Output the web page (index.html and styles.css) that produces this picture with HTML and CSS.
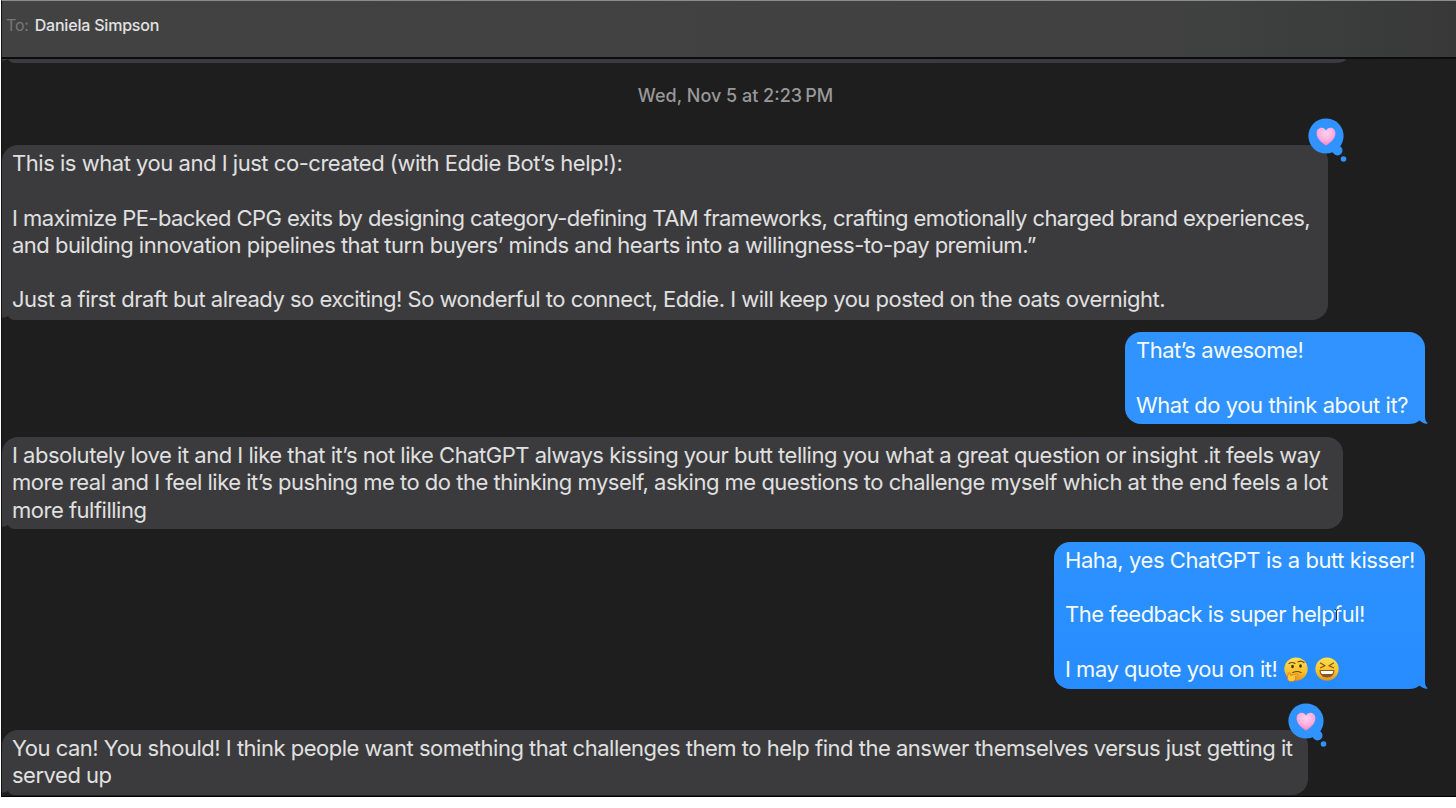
FILE: index.html
```
<!DOCTYPE html>
<html lang="en">
<head>
    <meta charset="UTF-8">
    <meta name="viewport" content="width=device-width, initial-scale=1.0">
    <title>Messages - Daniela Simpson</title>
    <link rel="stylesheet" href="styles.css">
</head>
<body>
    <!-- Shared shapes -->
    <svg class="defs" width="0" height="0">
        <defs>
            <radialGradient id="pink" cx="50%" cy="30%" r="70%">
                <stop offset="0" stop-color="#ffd3ee"/>
                <stop offset="0.55" stop-color="#ffb0e0"/>
                <stop offset="1" stop-color="#fb82bd"/>
            </radialGradient>
            <linearGradient id="yellow" x1="0" y1="0" x2="0" y2="1">
                <stop offset="0" stop-color="#ffe04f"/>
                <stop offset="0.6" stop-color="#fbc32d"/>
                <stop offset="1" stop-color="#e9931c"/>
            </linearGradient>
            <symbol id="heart-badge" viewBox="0 0 40 44">
                <circle cx="18" cy="18" r="17.6" fill="#3193ff"/>
                <circle cx="29.5" cy="32.5" r="5" fill="#3193ff"/>
                <circle cx="35.5" cy="41" r="2.8" fill="#3193ff"/>
                <path d="M18 27.5C14 24.6 8.6 20.8 8.6 15.4C8.6 12 10.8 9.8 13.4 9.8C15.6 9.8 17.2 11 18 12.7C18.8 11 20.4 9.8 22.6 9.8C25.2 9.8 27.4 12 27.4 15.4C27.4 20.8 22 24.6 18 27.5Z" fill="url(#pink)"/>
            </symbol>
        </defs>
    </svg>

    <div class="window">
        <!-- Header -->
        <header class="header">
            <span class="to">To:</span>
            <span class="name">Daniela Simpson</span>
        </header>

        <!-- Conversation -->
        <main class="chat">
            <div class="previous">
                <svg class="notch" width="12" height="4" viewBox="0 0 12 4"><path d="M0 4V1.5C3 1.8 5 1 6 0C7.5 2.5 9 3.5 12 4Z"/></svg>
            </div>
            <div class="timestamp">Wed, Nov 5 at 2:23&thinsp;PM</div>

            <div class="bubble received first">
                <p class="l1">This is what you and I just co-created (with Eddie Bot’s help!):</p>
                <br>
                <p class="l2">I maximize PE-backed CPG exits by designing category-defining TAM frameworks, crafting emotionally charged brand experiences,</p>
                <p class="l3">and building innovation pipelines that turn buyers’ minds and hearts into a willingness-to-pay premium.”</p>
                <br>
                <p class="l4">Just a first draft but already so exciting! So wonderful to connect, Eddie. I will keep you posted on the oats overnight.</p>
                <svg class="heart" width="40" height="44"><use href="#heart-badge"/></svg>
                <svg class="notch" width="12" height="4" viewBox="0 0 12 4"><path d="M0 4V1.5C3 1.8 5 1 6 0C7.5 2.5 9 3.5 12 4Z"/></svg>
            </div>

            <div class="bubble sent awesome">
                <p class="l5">That’s awesome!</p>
                <br>
                <p class="l6">What do you think about it?</p>
                <svg class="tail" width="19" height="12" viewBox="0 0 19 12"><path d="M16 0V5C16 8 17 10 19 11.5C16 12 13 11 10.5 8.5C8 11 4 12 0 12V0Z"/></svg>
            </div>

            <div class="bubble received second">
                <p class="l7">I absolutely love it and I like that it’s not like ChatGPT always kissing your butt telling you what a great question or insight .it feels way</p>
                <p class="l8">more real and I feel like it’s pushing me to do the thinking myself, asking me questions to challenge myself which at the end feels a lot</p>
                <p class="l9">more fulfilling</p>
                <svg class="notch" width="12" height="4" viewBox="0 0 12 4"><path d="M0 4V1.5C3 1.8 5 1 6 0C7.5 2.5 9 3.5 12 4Z"/></svg>
            </div>

            <div class="bubble sent kisser">
                <p class="l10">Haha, yes ChatGPT is a butt kisser!</p>
                <br>
                <p class="l11">The feedback is super helpful!</p>
                <br>
                <p class="l12"><span>I may quote you on it!</span>
                    <svg class="emoji" width="24" height="25" viewBox="0 0 24 25">
                        <circle cx="12" cy="12" r="11.6" fill="url(#yellow)"/>
                        <path d="M5 6.500Q8 4.500 11 6.500M14 5Q17 3 20 5.500" stroke="#70451b" stroke-width="1.2" fill="none" stroke-linecap="round"/>
                        <ellipse cx="8.5" cy="9.5" rx="1.4" ry="1.8" fill="#4b2d14"/>
                        <ellipse cx="16.5" cy="9" rx="1.4" ry="1.8" fill="#4b2d14"/>
                        <path d="M9 15.5Q13 13.5 17 15.5" stroke="#70451b" stroke-width="1.2" fill="none" stroke-linecap="round"/>
                        <path d="M4.5 16C5.5 15 6.5 16 6.5 18.5L13 16.8C14.5 16.5 15 18 13.8 18.5L11 19.7C12.5 21 11 24.5 8 24.7C4.5 25 3 22.5 3.4 20Z" fill="#ffc83c" stroke="#d67d18" stroke-width="0.8"/>
                    </svg>
                    <svg class="emoji" width="24" height="25" viewBox="0 0 24 25">
                        <circle cx="12" cy="12" r="11.6" fill="url(#yellow)"/>
                        <path d="M5.500 6L10 8.700L5.500 10.800M18.500 6L14 8.700L18.500 10.800" stroke="#7d5320" stroke-width="1.2" fill="none" stroke-linecap="round" stroke-linejoin="round"/>
                        <path d="M4.500 13H19.500C19.300 17.800 16.500 20.500 12 20.500S4.700 17.800 4.500 13Z" fill="#8a5622"/>
                        <path d="M5.700 14H18.300C18 16 17.500 16.700 16.500 17H7.500C6.500 16.700 6 16 5.700 14Z" fill="#fff"/>
                    </svg>
                </p>
                <svg class="cursor" width="5" height="12" viewBox="0 0 5 12"><path d="M0.5 0.5Q2.5 0.5 2.5 2Q2.5 0.5 4.5 0.5M2.5 2V11" fill="none" stroke="#12365f"/></svg>
                <svg class="tail" width="19" height="12" viewBox="0 0 19 12"><path d="M16 0V5C16 8 17 10 19 11.5C16 12 13 11 10.5 8.5C8 11 4 12 0 12V0Z"/></svg>
            </div>

            <div class="bubble received last">
                <p class="l13">You can! You should! I think people want something that challenges them to help find the answer themselves versus just getting it</p>
                <p class="l14">served up</p>
                <svg class="heart" width="40" height="44"><use href="#heart-badge"/></svg>
                <svg class="notch" width="12" height="4" viewBox="0 0 12 4"><path d="M0 4V1.5C3 1.8 5 1 6 0C7.5 2.5 9 3.5 12 4Z"/></svg>
            </div>
        </main>
    </div>
</body>
</html>
```
FILE: styles.css
```
body {
    margin: 0;
    background: white;
    font-family: Inter, 'Liberation Sans', sans-serif;
    overflow: hidden;
}

.defs {
    position: absolute;
}

.window {
    box-sizing: border-box;
    margin-left: 1px;
    height: 797px;
    background: #1e1e1e;
    border-top: 1px solid #8a8d8a;
    border-left: 1px solid #101112;
    border-bottom: 1px solid #000;
    overflow: hidden;
}

/* Header */
.header {
    box-sizing: border-box;
    height: 58px;
    padding: 13px 0 0 4px;
    background: linear-gradient(90deg, #424243 0%, #414142 80%, #3b3e3c 91%, #383838 100%);
    border-bottom: 2px solid #0c0c0c;
    display: flex;
    gap: 6px;
    font-size: 16px;
    line-height: 23px;
    letter-spacing: -0.2px;
}

.to {
    color: #77787a;
}

.name {
    color: #e2e2e2;
    font-weight: 500;
}

/* Conversation */
.chat {
    display: flex;
    flex-direction: column;
    align-items: flex-start;
}

.previous {
    position: relative;
    width: 1344px;
    height: 4px;
    background: #3b3b3d;
    border-bottom-right-radius: 10px 4px;
}

.timestamp {
    align-self: center;
    margin: 21px 0 0 13px;
    height: 24px;
    line-height: 24px;
    font-size: 18px;
    font-weight: 500;
    color: #98989a;
}

.bubble {
    box-sizing: border-box;
    position: relative;
    padding: 5px 11px 5px 10px;
    border-radius: 16px;
    font-size: 22px;
    line-height: 27.3px;
    letter-spacing: -0.49px;
    white-space: nowrap;
    margin-bottom: 12.5px;
}

.bubble p {
    margin: 0;
    height: 27.3px;
}

.received {
    background: #3b3b3d;
    color: #e0e0e0;
    border-bottom-left-radius: 0;
}

.sent {
    align-self: flex-end;
    margin-right: 31px;
    padding-left: 11px;
    background: #3193ff;
    color: #f4faff;
    border-bottom-right-radius: 0;
}

.first {
    margin-top: 37px;
    width: 1326px;
    height: 175px;
    margin-bottom: 12px;
}

.awesome {
    width: 300px;
    height: 92px;
    margin-bottom: 13px;
}

.second {
    width: 1341px;
    height: 92px;
}

.kisser {
    width: 371px;
    height: 147px;
    background: linear-gradient(#2d91ff, #278dff);
    margin-bottom: 41px;
}

.last {
    width: 1306px;
    height: 65px;
}

/* Line tracking */
.l1 {
    letter-spacing: -0.47px;
}

.l2 {
    letter-spacing: -0.57px;
}

.l3 {
    letter-spacing: -0.52px;
}

.l4 {
    letter-spacing: -0.51px;
}

.l6, .l10 {
    letter-spacing: -0.43px;
}

.l8 {
    letter-spacing: -0.5px;
}

.l11 {
    letter-spacing: -0.53px;
}

/* Bubble tails */
.notch {
    position: absolute;
    left: 0;
    bottom: 0;
    fill: #1e1e1e;
}

.tail {
    position: absolute;
    right: -3px;
    bottom: 0;
    fill: #3193ff;
    background: linear-gradient(90deg, #1e1e1e 16px, transparent 16px);
}

.kisser .tail {
    fill: #278dff;
}

/* Reactions */
.heart {
    position: absolute;
    right: -20px;
    top: -27px;
}

.emoji {
    vertical-align: -5px;
    margin-left: 1px;
}

.cursor {
    position: absolute;
    left: 280px;
    top: 67px;
}
```
